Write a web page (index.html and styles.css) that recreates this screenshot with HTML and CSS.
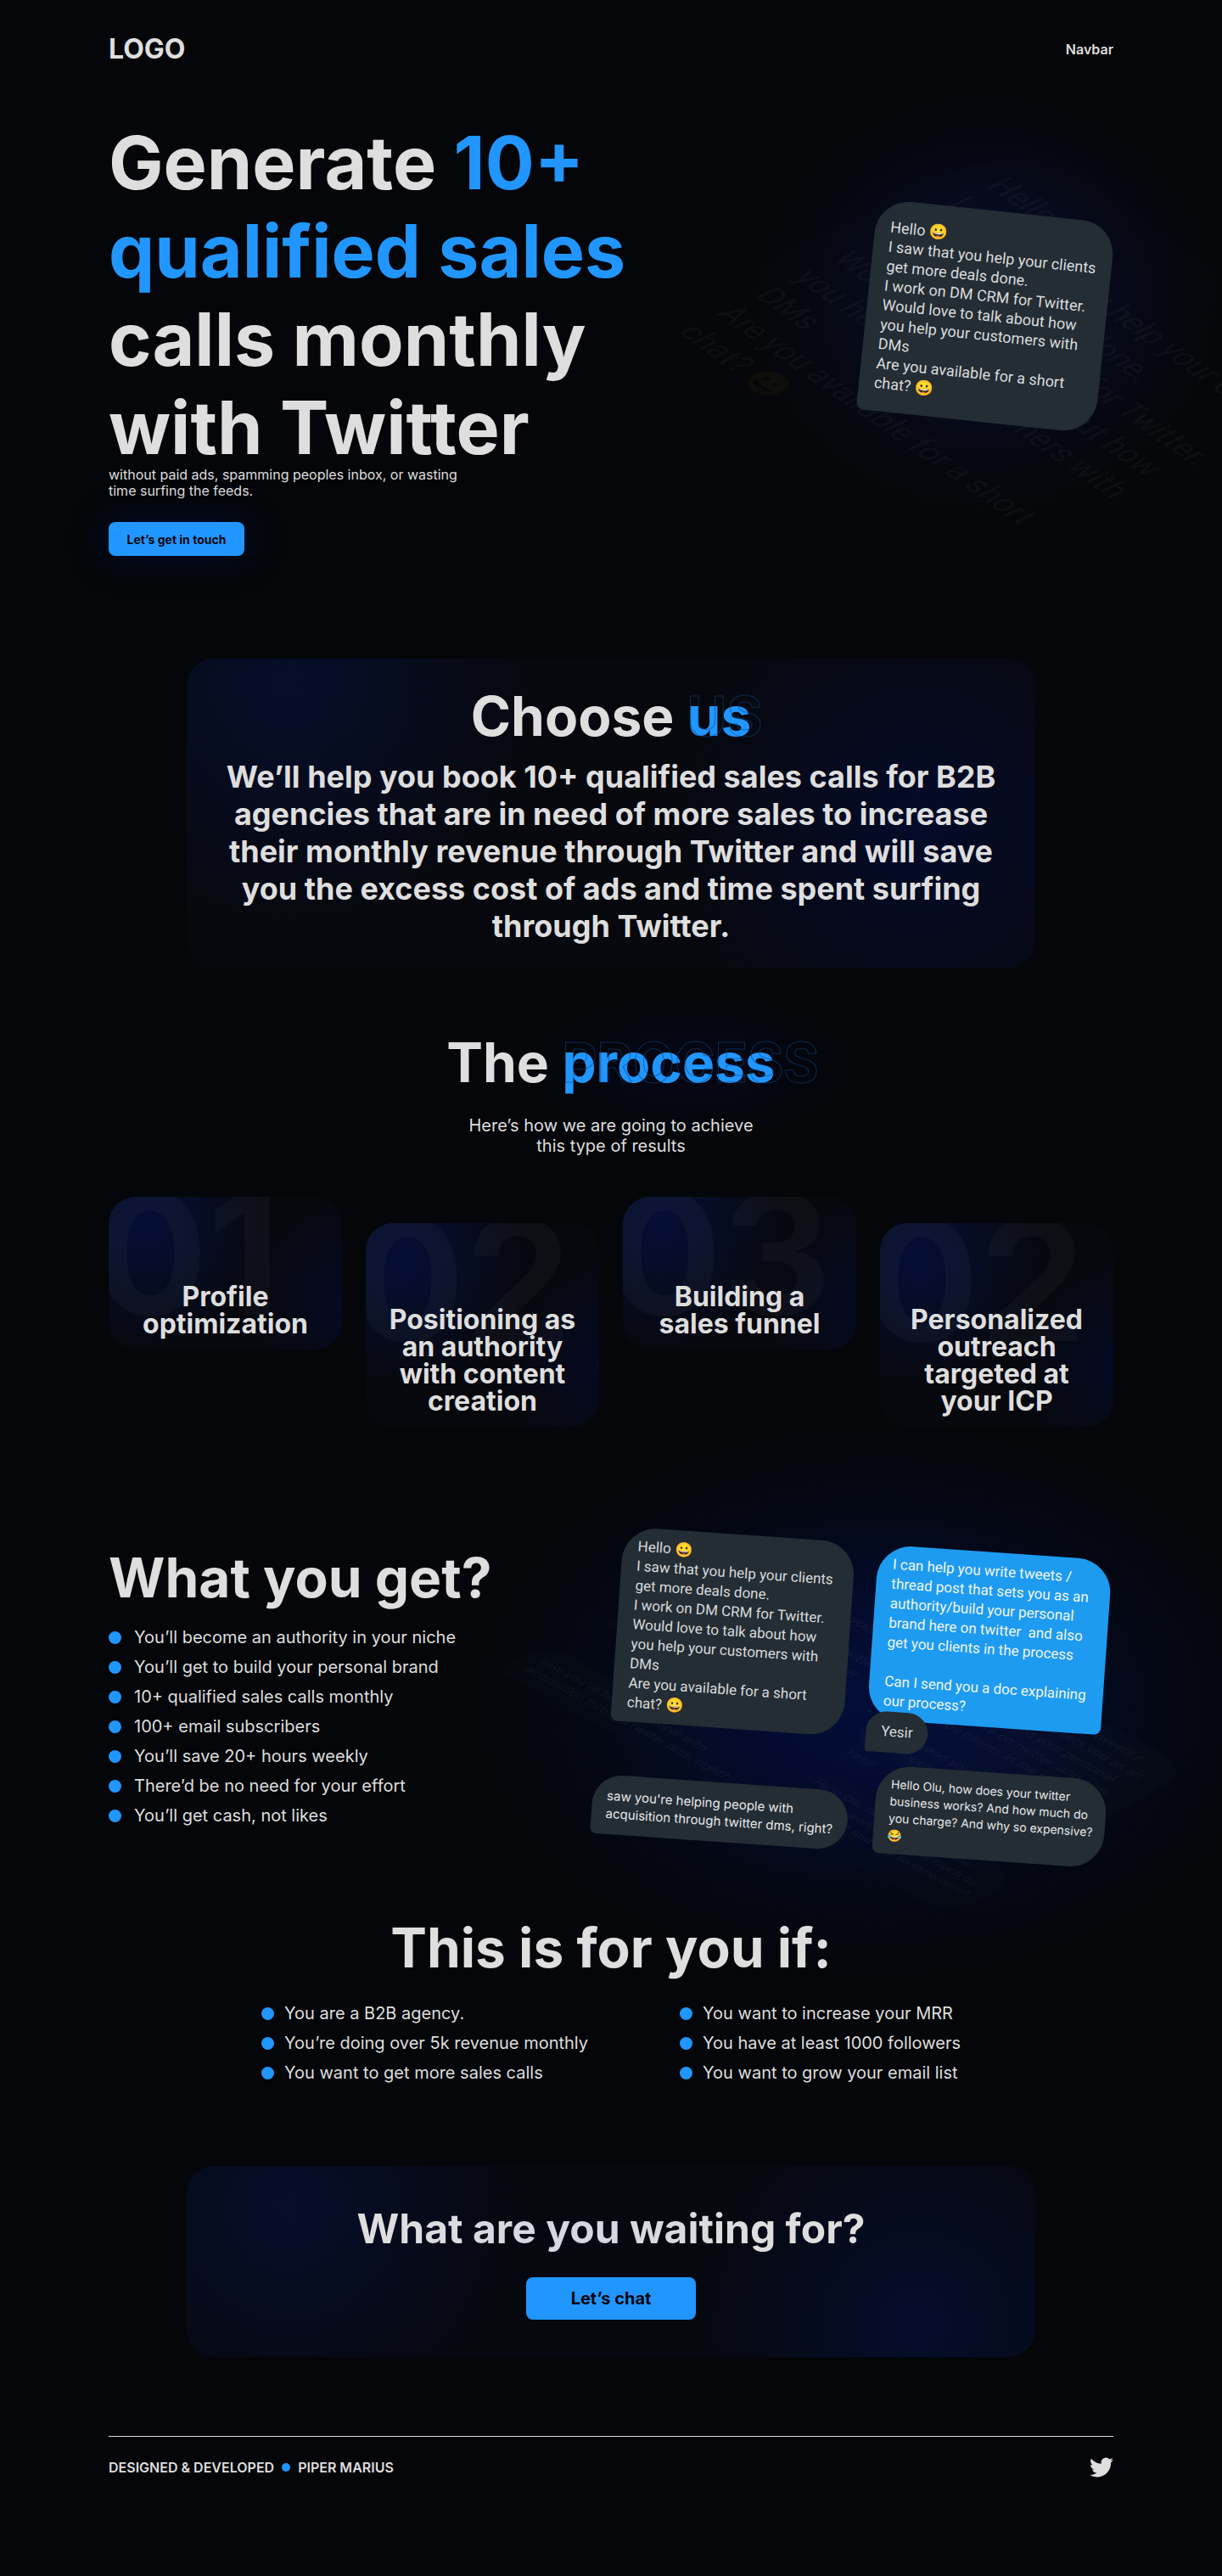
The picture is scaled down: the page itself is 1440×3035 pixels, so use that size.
FILE: index.html
```html
<!DOCTYPE html>
<html lang="en">
<head>
  <meta charset="utf-8">
  <meta name="viewport" content="width=device-width, initial-scale=1">
  <title>Generate 10+ qualified sales calls monthly with Twitter</title>
  <link rel="stylesheet" href="styles.css">
</head>
<body>
  <div class="page">
    <header class="header container">
      <a class="logo" href="#">LOGO</a>
      <nav><a class="nav-link" href="#">Navbar</a></nav>
    </header>

    <main>
      <section class="hero container">
        <div class="hero-copy">
          <h1>Generate <span class="accent">10+ qualified sales</span> calls monthly with Twitter</h1>
          <p class="hero-note">without paid ads, spamming peoples inbox, or wasting time surfing the feeds.</p>
          <button class="button hero-button" type="button">Let’s get in touch</button>
        </div>
        <div class="hero-visual">
          <div class="glow hero-glow"></div>
          <p class="bubble hero-ghost" aria-hidden="true">Hello 😀<br>I saw that you help your clients<br>get more deals done.<br>I work on DM CRM for Twitter.<br>Would love to talk about how<br>you help your customers with<br>DMs<br>Are you available for a short<br>chat? 😀</p>
          <p class="bubble hero-bubble">Hello 😀<br>I saw that you help your clients<br>get more deals done.<br>I work on DM CRM for Twitter.<br>Would love to talk about how<br>you help your customers with<br>DMs<br>Are you available for a short<br>chat? 😀</p>
        </div>
      </section>

      <section class="panel choose">
        <h2>Choose <span class="accent echo">us<span class="echo-outline" aria-hidden="true">US</span></span></h2>
        <p class="choose-text">We’ll help you book 10+ qualified sales calls for B2B agencies that are in need of more sales to increase their monthly revenue through Twitter and will save you the excess cost of ads and time spent surfing through Twitter.</p>
      </section>

      <section class="process container">
        <h2>The <span class="accent echo echo-glow">process<span class="echo-outline" aria-hidden="true">PROCESS</span></span></h2>
        <p class="process-note">Here’s how we are going to achieve this type of results</p>
        <ol class="steps">
          <li class="step"><span class="step-number" aria-hidden="true">01</span><h3>Profile optimization</h3></li>
          <li class="step"><span class="step-number" aria-hidden="true">02</span><h3>Positioning as an authority with content creation</h3></li>
          <li class="step"><span class="step-number" aria-hidden="true">03</span><h3>Building a sales funnel</h3></li>
          <li class="step"><span class="step-number" aria-hidden="true">02</span><h3>Personalized outreach targeted at your ICP</h3></li>
        </ol>
      </section>

      <section class="benefits container">
        <div class="benefits-copy">
          <h2>What you get?</h2>
          <ul class="dots">
            <li>You’ll become an authority in your niche</li>
            <li>You’ll get to build your personal brand</li>
            <li>10+ qualified sales calls monthly</li>
            <li>100+ email subscribers</li>
            <li>You’ll save 20+ hours weekly</li>
            <li>There’d be no need for your effort</li>
            <li>You’ll get cash, not likes</li>
          </ul>
        </div>
        <div class="chats-visual">
          <div class="glow chats-glow"></div>
          <div class="chats chats-ghost" aria-hidden="true">
            <div class="chats-column chats-left">
              <p class="bubble chat-intro">Hello 😀<br>I saw that you help your clients<br>get more deals done.<br>I work on DM CRM for Twitter.<br>Would love to talk about how<br>you help your customers with<br>DMs<br>Are you available for a short<br>chat? 😀</p>
              <p class="bubble chat-lead">saw you're helping people with<br>acquisition through twitter dms, right?</p>
            </div>
            <div class="chats-column">
              <p class="bubble chat-offer">I can help you write tweets /<br>thread post that sets you as an<br>authority/build your personal<br>brand here on twitter&nbsp; and also<br>get you clients in the process<br><br>Can I send you a doc explaining<br>our process?</p>
              <p class="bubble chat-yes">Yesir</p>
              <p class="bubble chat-price">Hello Olu, how does your twitter<br>business works? And how much do<br>you charge? And why so expensive?<br>😂</p>
            </div>
          </div>
          <div class="chats chats-front">
            <div class="chats-column chats-left">
              <p class="bubble chat-intro">Hello 😀<br>I saw that you help your clients<br>get more deals done.<br>I work on DM CRM for Twitter.<br>Would love to talk about how<br>you help your customers with<br>DMs<br>Are you available for a short<br>chat? 😀</p>
              <p class="bubble chat-lead">saw you're helping people with<br>acquisition through twitter dms, right?</p>
            </div>
            <div class="chats-column">
              <p class="bubble chat-offer">I can help you write tweets /<br>thread post that sets you as an<br>authority/build your personal<br>brand here on twitter&nbsp; and also<br>get you clients in the process<br><br>Can I send you a doc explaining<br>our process?</p>
              <p class="bubble chat-yes">Yesir</p>
              <p class="bubble chat-price">Hello Olu, how does your twitter<br>business works? And how much do<br>you charge? And why so expensive?<br>😂</p>
            </div>
          </div>
        </div>
      </section>

      <section class="fit container">
        <h2>This is for you if:</h2>
        <div class="fit-lists">
          <ul class="dots">
            <li>You are a B2B agency.</li>
            <li>You’re doing over 5k revenue monthly</li>
            <li>You want to get more sales calls</li>
          </ul>
          <ul class="dots">
            <li>You want to increase your MRR</li>
            <li>You have at least 1000 followers</li>
            <li>You want to grow your email list</li>
          </ul>
        </div>
      </section>

      <section class="panel cta">
        <h2 class="cta-title">What are you waiting for?</h2>
        <button class="button cta-button" type="button">Let’s chat</button>
      </section>
    </main>

    <footer class="footer container">
      <p class="credit"><span>DESIGNED &amp; DEVELOPED</span><span class="credit-dot"></span><span>PIPER MARIUS</span></p>
      <a class="social" href="#" aria-label="Twitter">
        <svg width="28" height="28" viewBox="0 0 24 24" fill="currentColor" aria-hidden="true"><path d="M23.953 4.57a10 10 0 01-2.825.775 4.958 4.958 0 002.163-2.723c-.951.555-2.005.959-3.127 1.184a4.92 4.92 0 00-8.384 4.482C7.69 8.095 4.067 6.13 1.64 3.162a4.822 4.822 0 00-.666 2.475c0 1.71.87 3.213 2.188 4.096a4.904 4.904 0 01-2.228-.616v.06a4.923 4.923 0 003.946 4.827 4.996 4.996 0 01-2.212.085 4.936 4.936 0 004.604 3.417 9.867 9.867 0 01-6.102 2.105c-.39 0-.779-.023-1.17-.067a13.995 13.995 0 007.557 2.209c9.053 0 13.998-7.496 13.998-13.985 0-.21 0-.42-.015-.63A9.935 9.935 0 0024 4.59z"/></svg>
      </a>
    </footer>
  </div>
</body>
</html>
```
FILE: styles.css
```css
:root {
  --bg: #040609;
  --text: #dedede;
  --accent: #2196ff;
  --bubble: #242d34;
}

* {
  box-sizing: border-box;
  margin: 0;
  padding: 0;
}

body {
  background: var(--bg);
  color: var(--text);
  font-family: Inter, "Liberation Sans", sans-serif;
}

a {
  color: inherit;
  text-decoration: none;
}

ul,
ol {
  list-style: none;
}

.page {
  overflow: hidden;
  padding: 38px 0 114px;
}

.container {
  width: calc(100% - 48px);
  max-width: 1184px;
  margin-left: auto;
  margin-right: auto;
}

.accent {
  color: var(--accent);
}

.glow {
  position: absolute;
  pointer-events: none;
}

h2 {
  font-size: 64px;
  line-height: 77px;
  font-weight: 700;
}

.button {
  position: relative;
  border: 0;
  border-radius: 8px;
  background: var(--accent);
  color: #05070d;
  font-family: inherit;
  font-weight: 700;
  cursor: pointer;
}

/* Header */

.header {
  display: flex;
  align-items: center;
  justify-content: space-between;
}

.logo {
  font-size: 32px;
  line-height: 39px;
  font-weight: 700;
}

.nav-link {
  font-size: 16px;
  line-height: 19px;
  font-weight: 600;
}

/* Hero */

.hero {
  display: flex;
  justify-content: space-between;
  align-items: flex-start;
  margin-top: 63px;
}

.hero-copy {
  max-width: 640px;
}

h1 {
  font-size: 86px;
  line-height: 104px;
  font-weight: 700;
}

.hero-note {
  max-width: 430px;
  margin-top: -6px;
  font-size: 16px;
  line-height: 19px;
}

.hero-button {
  width: 160px;
  height: 40px;
  margin-top: 27px;
  font-size: 14px;
  box-shadow: 0 0 40px 4px rgba(8, 20, 90, 0.4);
}

.hero-visual {
  position: relative;
  margin: 108px 9px 0 0;
}

.hero-glow {
  inset: -150px -140px -110px;
  background: radial-gradient(closest-side, #070c2a, #060a20 40%, rgba(6, 9, 28, 0.4) 70%, transparent);
}

/* Chat bubbles */

.bubble {
  width: max-content;
  border-radius: 40px 40px 40px 8px;
  background: var(--bubble);
  color: #d9dadb;
  font-family: Roboto, "Liberation Sans", sans-serif;
  font-weight: 400;
  white-space: nowrap;
}

.hero-bubble,
.hero-ghost {
  padding: 20px 18px 22px;
  width: 282px;
  font-size: 18px;
  line-height: 23px;
}

.hero-bubble {
  position: relative;
  transform: rotate(6deg);
}

.hero-ghost {
  position: absolute;
  inset: 0;
  opacity: 0.04;
  transform: translate(26px, 65px) matrix(1.605, 1.116, -1.979, 0.938, 0, 0);
}

/* Panels */

.panel {
  width: calc(100% - 48px);
  max-width: 1000px;
  margin-left: auto;
  margin-right: auto;
  border-radius: 32px;
  text-align: center;
}

.choose {
  margin-top: 121px;
  padding: 29px 40px 28px;
  background:
    radial-gradient(circle 300px at 12% 8%, #060e2b, transparent),
    radial-gradient(circle 300px at 86% 55%, #040b29, transparent),
    #07080d;
}

.choose-text {
  margin-top: 11px;
  font-size: 36px;
  line-height: 44px;
  font-weight: 700;
}

/* Outlined capitals laid over an accent word */

.echo {
  position: relative;
  display: inline-block;
}

.echo-glow::before {
  content: "";
  position: absolute;
  inset: -50px -110px -60px -60px;
  z-index: -1;
  background: radial-gradient(closest-side, #050717, transparent);
}

.echo-outline {
  position: absolute;
  left: 0;
  bottom: 0;
  color: transparent;
  -webkit-text-stroke: 1px rgba(14, 68, 122, 0.6);
}

/* Process */

.process {
  position: relative;
  z-index: 0;
  margin-top: 72px;
  text-align: center;
}

.process-note {
  max-width: 360px;
  margin: 24px auto 0;
  font-size: 20px;
  line-height: 24px;
}

.steps {
  display: grid;
  grid-template-columns: repeat(4, 1fr);
  gap: 28px;
  align-items: start;
  margin-top: 48px;
}

.step {
  position: relative;
  display: flex;
  flex-direction: column;
  justify-content: flex-end;
  min-height: 180px;
  padding: 98px 24px 14px;
  border-radius: 32px;
  overflow: hidden;
  background:
    radial-gradient(circle 150px at 16% 18%, #050f36, transparent),
    radial-gradient(circle 130px at 105% 70%, #050a24, transparent),
    #07080d;
}

.step:nth-child(even) {
  margin-top: 31px;
}

.step h3 {
  position: relative;
  font-size: 32px;
  line-height: 32px;
  font-weight: 700;
}

.step-number {
  position: absolute;
  top: -34px;
  left: -18px;
  color: rgba(255, 255, 255, 0.03);
  font-size: 200px;
  line-height: 200px;
  font-weight: 700;
}

/* Dotted lists */

.dots {
  display: grid;
  align-content: start;
  gap: 11px;
  font-size: 20px;
  line-height: 24px;
}

.dots li {
  display: flex;
  align-items: center;
  gap: 15px;
  white-space: nowrap;
}

.dots li::before {
  content: "";
  flex: none;
  width: 15px;
  height: 15px;
  border-radius: 50%;
  background: var(--accent);
}

/* Benefits */

.benefits {
  display: flex;
  justify-content: space-between;
  align-items: flex-start;
  margin-top: 137px;
}

.benefits .dots {
  margin-top: 20px;
}

.benefits-copy {
  padding-top: 2px;
}

.chats-visual {
  position: relative;
}

.chats-glow {
  inset: -150px -210px -160px -160px;
  background: radial-gradient(closest-side, #020d3a, #030b2c 35%, rgba(4, 9, 28, 0.5) 70%, transparent);
}

.chats {
  display: flex;
  gap: 14px;
  font-size: 17px;
  line-height: 23px;
}

.chats-front {
  position: relative;
  transform: rotate(4deg);
}

.chats-ghost {
  position: absolute;
  inset: 0;
  opacity: 0.05;
  transform: translate(-8px, 30px) matrix(0.88, 0.48, -0.82, 0.46, 0, 0);
}

.chats-column {
  display: flex;
  flex-direction: column;
}

.chats-left {
  justify-content: space-between;
}

.chat-intro {
  width: 274px;
  margin-left: 15px;
  padding: 11px 18px;
}

.chat-offer {
  width: 276px;
  padding: 11px 18px;
  border-radius: 40px 40px 8px 40px;
  background: #1d9bf0;
  color: #f2f5f7;
}

.chats-ghost .chat-offer {
  background: #34465c;
}

.chat-yes {
  position: relative;
  margin-top: -10px;
  padding: 12px 18px 13px;
  border-radius: 28px 28px 28px 4px;
}

.chat-lead {
  padding: 14px 17px;
  color: #e6e7e8;
  font-family: Inter, "Liberation Sans", sans-serif;
  font-size: 15px;
  line-height: 21px;
}

.chat-price {
  width: 272px;
  margin: 15px 0 0 17px;
  padding: 12px 17px;
  color: #e6e7e8;
  font-family: Inter, "Liberation Sans", sans-serif;
  font-size: 14px;
  line-height: 20px;
}

/* Audience */

.fit {
  position: relative;
  margin-top: 75px;
  text-align: center;
}

.fit-lists {
  display: grid;
  grid-template-columns: 3fr 2fr;
  max-width: 824px;
  margin: 27px auto 0;
  text-align: left;
}

.fit .dots li {
  gap: 12px;
}

/* Call to action */

.cta {
  margin-top: 98px;
  padding: 45px 40px 44px;
  background:
    radial-gradient(circle 260px at 12% 22%, #060e2b, transparent),
    radial-gradient(circle 260px at 86% 84%, #050d2c, transparent),
    #06080f;
}

.cta-title {
  background: radial-gradient(circle 220px at 45% 50%, #d4d6e2, #dedede);
  background-clip: text;
  -webkit-background-clip: text;
  color: transparent;
  font-size: 48px;
  line-height: 58px;
}

.cta-button {
  width: 200px;
  height: 50px;
  margin-top: 28px;
  font-size: 20px;
}

/* Footer */

.footer {
  display: flex;
  align-items: center;
  justify-content: space-between;
  margin-top: 93px;
  padding-top: 22px;
  border-top: 1px solid var(--text);
}

.credit {
  display: flex;
  align-items: center;
  gap: 9px;
  font-size: 16px;
  line-height: 19px;
  font-weight: 600;
}

.credit-dot {
  width: 10px;
  height: 10px;
  border-radius: 50%;
  background: var(--accent);
}

.social {
  display: block;
  height: 28px;
}

.social svg {
  display: block;
}
```
